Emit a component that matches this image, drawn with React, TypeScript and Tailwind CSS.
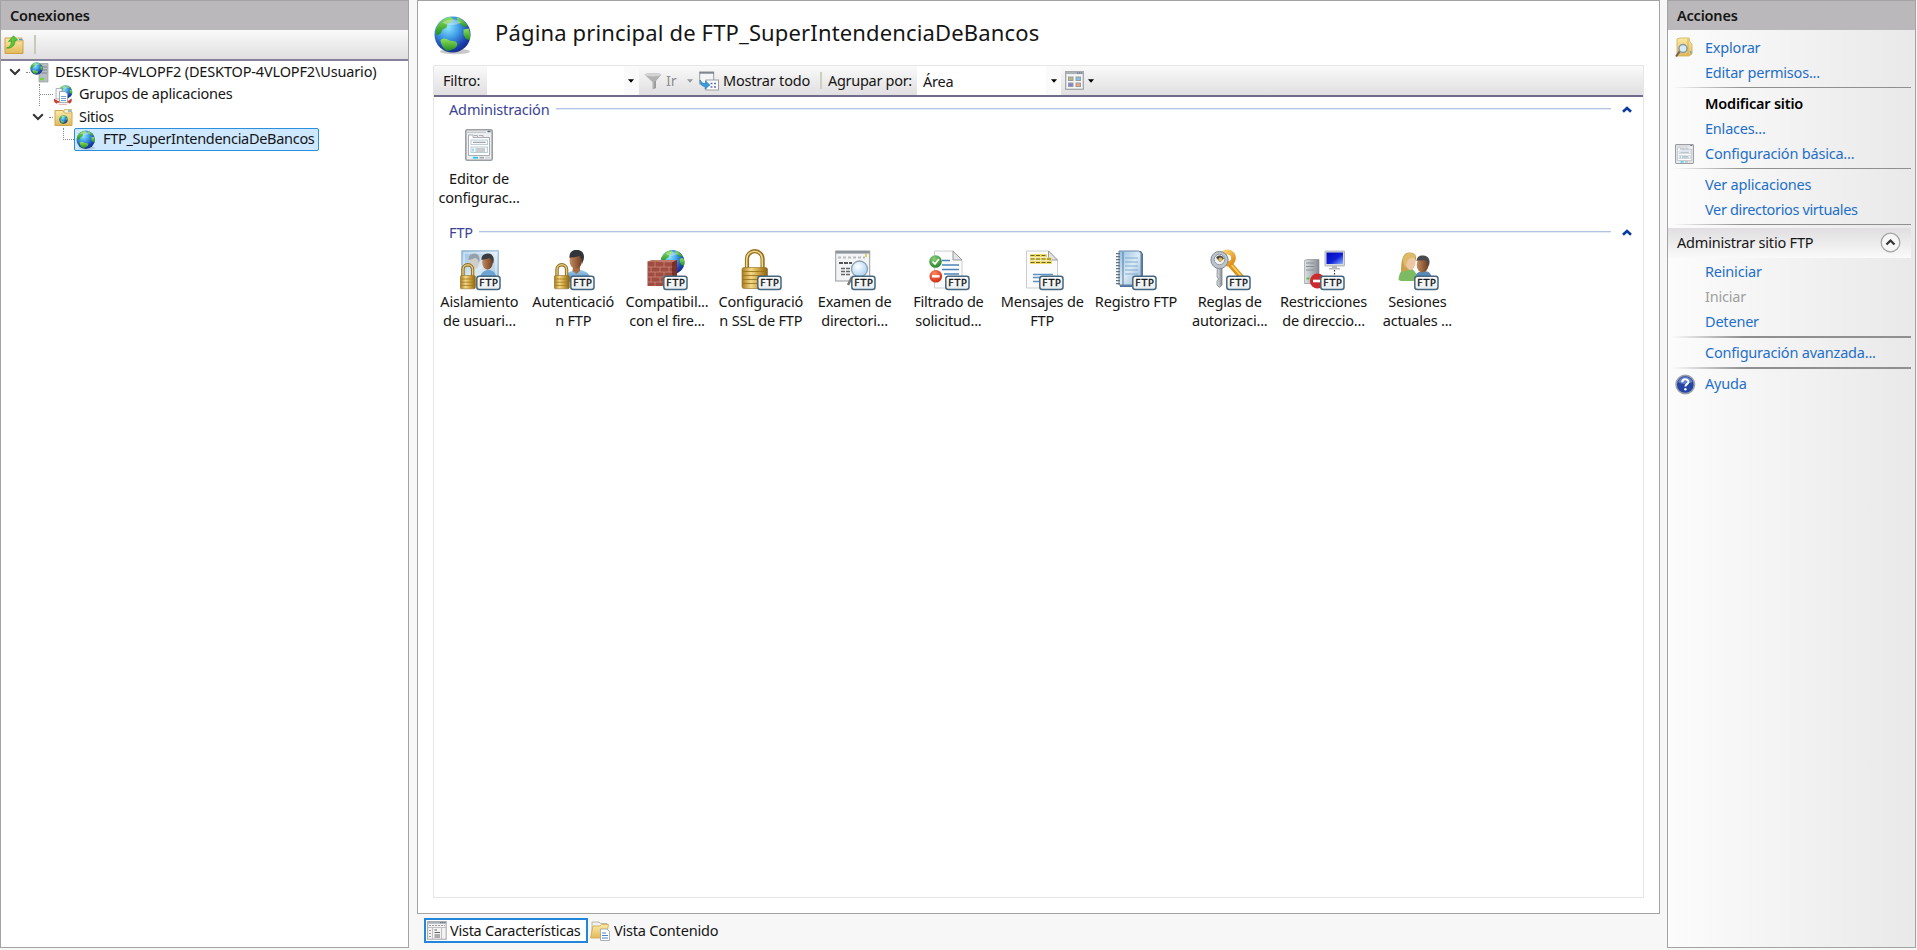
import type { ReactNode } from "react";

/* ---------- shared gradients ---------- */
function Defs() {
  return (
    <svg width="0" height="0" className="absolute" aria-hidden="true">
      <defs>
        <radialGradient id="sea" cx="0.38" cy="0.3" r="0.75">
          <stop offset="0" stopColor="#8fe6fb" />
          <stop offset="0.4" stopColor="#3f9de6" />
          <stop offset="0.8" stopColor="#1b3fae" />
          <stop offset="1" stopColor="#142c86" />
        </radialGradient>
        <linearGradient id="land" x1="0" y1="0" x2="0" y2="1">
          <stop offset="0" stopColor="#8fe05a" />
          <stop offset="1" stopColor="#1f8d22" />
        </linearGradient>
        <linearGradient id="gold" x1="0" y1="0" x2="1" y2="0">
          <stop offset="0" stopColor="#a97a1c" />
          <stop offset="0.35" stopColor="#f3d98a" />
          <stop offset="0.7" stopColor="#c89a34" />
          <stop offset="1" stopColor="#86601a" />
        </linearGradient>
        <linearGradient id="folder" x1="0" y1="0" x2="0" y2="1">
          <stop offset="0" stopColor="#fbeaa4" />
          <stop offset="1" stopColor="#e3b95a" />
        </linearGradient>
        <linearGradient id="glass" x1="0" y1="0" x2="1" y2="1">
          <stop offset="0" stopColor="#8fbfe3" />
          <stop offset="0.5" stopColor="#dcebf5" />
          <stop offset="1" stopColor="#8db4d6" />
        </linearGradient>
        <linearGradient id="steel" x1="0" y1="0" x2="1" y2="0">
          <stop offset="0" stopColor="#dfe3e6" />
          <stop offset="1" stopColor="#858c92" />
        </linearGradient>
        <linearGradient id="shirt" x1="0" y1="0" x2="0" y2="1">
          <stop offset="0" stopColor="#9fd0f0" />
          <stop offset="1" stopColor="#3e78ae" />
        </linearGradient>
        <linearGradient id="skin" x1="0" y1="0" x2="1" y2="0">
          <stop offset="0" stopColor="#c58a5e" />
          <stop offset="1" stopColor="#6e3f22" />
        </linearGradient>
        <radialGradient id="lens" cx="0.4" cy="0.35" r="0.7">
          <stop offset="0" stopColor="#ffffff" />
          <stop offset="1" stopColor="#a5cff2" />
        </radialGradient>
        <radialGradient id="red" cx="0.4" cy="0.3" r="0.7">
          <stop offset="0" stopColor="#ff8a62" />
          <stop offset="1" stopColor="#cf2a10" />
        </radialGradient>
        <radialGradient id="green" cx="0.4" cy="0.3" r="0.7">
          <stop offset="0" stopColor="#8ad07a" />
          <stop offset="1" stopColor="#2c8530" />
        </radialGradient>
        <linearGradient id="amber" x1="0" y1="0" x2="1" y2="1">
          <stop offset="0" stopColor="#ffd873" />
          <stop offset="1" stopColor="#dd8a12" />
        </linearGradient>
        <linearGradient id="screen" x1="0" y1="0" x2="1" y2="1">
          <stop offset="0" stopColor="#0008b8" />
          <stop offset="0.55" stopColor="#1020d8" />
          <stop offset="1" stopColor="#8fb6ff" />
        </linearGradient>
        <linearGradient id="badge" x1="0" y1="0" x2="0" y2="1">
          <stop offset="0" stopColor="#ffffff" />
          <stop offset="1" stopColor="#e6ecf0" />
        </linearGradient>
      </defs>
    </svg>
  );
}

/* ---------- building blocks for drawings ---------- */
function Globe({ cx, cy, r }: { cx: number; cy: number; r: number }) {
  return (
    <g transform={`translate(${cx} ${cy}) scale(${r / 18})`}>
      <circle r="18" fill="url(#sea)" />
      <path d="M-15-9C-12-14-6-17-2-17.500L1-15-1-12-5-11-6-7-10-5-12-1-16 1C-17-2-17-6-15-9Z" fill="url(#land)" />
      <path d="M4-17C9-16 13-12 15-9L12-7 9-10 6-11 5-14Z" fill="url(#land)" />
      <path d="M11-5L16-6C18-2 18 3 17 6L13 4 11 0Z" fill="url(#land)" />
      <path d="M-12 6C-10 3-6 4-3 6L3 7C6 9 5 12 2 14L-4 16.500C-8 16-11 12-12 6Z" fill="url(#land)" />
      <path d="M-10-12C-5-16 4-16 9-12 3-9-5-8-10-12Z" fill="#fff" opacity="0.35" />
    </g>
  );
}

function FtpBadge() {
  return (
    <g>
      <rect x="15.800" y="27.300" width="23.200" height="13.200" rx="2.500" fill="url(#badge)" stroke="#46677f" strokeWidth="1.500" />
      <text x="27.400" y="37.400" textAnchor="middle" fontFamily="'DejaVu Sans', sans-serif" fontSize="9.500" fontWeight="400" fill="#111" stroke="#111" strokeWidth="0.350" textLength="18.500">
        FTP
      </text>
    </g>
  );
}

function SmallLock() {
  return (
    <g>
      <path d="M2 28V20.500a4.800 4.800 0 0 1 9.600 0V28" fill="none" stroke="#8d6c22" strokeWidth="3.400" />
      <path d="M2 28V20.500a4.800 4.800 0 0 1 9.600 0V28" fill="none" stroke="#e6cb7c" strokeWidth="1.400" />
      <rect x="-0.800" y="26.500" width="15.200" height="13.300" rx="1.500" fill="url(#gold)" stroke="#94712a" strokeWidth="0.600" />
      <path d="M0 30H14M0 33.200H14M0 36.400H14" stroke="#a17820" strokeWidth="0.800" />
    </g>
  );
}

function Person() {
  return (
    <g>
      <path d="M8 33C9 25 13 23 19 21.500L26 21C33 23 36 26 36 33Z" fill="url(#shirt)" />
      <path d="M18 17H25V22L21.500 25 17.500 22Z" fill="#a56e47" />
      <ellipse cx="20.800" cy="11.800" rx="6.200" ry="8" fill="url(#skin)" />
      <path d="M14.500 9C14 3 18 0.500 22 1 28 1 30 6 28.500 11L27 15C27 11 26 8 24 7 21 8.500 17 8 14.500 9Z" fill="#33343a" />
    </g>
  );
}

function Doc({ x, w }: { x: number; w: number }) {
  const r = x + w;
  return (
    <g>
      <path d={`M${x} 2H${r - 9}L${r} 11V39H${x}Z`} fill="#fbfbfc" stroke="#c9cdd1" />
      <path d={`M${r - 9} 2V11H${r}Z`} fill="#e2e4e6" stroke="#96999e" />
    </g>
  );
}

function FeatureSvg({ children }: { children: ReactNode }) {
  return (
    <svg width="42" height="42" viewBox="-1 0 42 42" className="ml-[3px] shrink-0">
      {children}
      <FtpBadge />
    </svg>
  );
}

function WindowPage({ w, h }: { w: number; h: number }) {
  return (
    <svg width={w} height={h} viewBox="0 0 28 32" preserveAspectRatio="none" className="shrink-0">
      <rect x="0.800" y="0.800" width="26.400" height="30.400" rx="1.500" fill="#eceef0" stroke="#9b9ea2" strokeWidth="1.600" />
      <path d="M2 3.200H21" stroke="#b7babd" strokeWidth="1" />
      <path d="M22.500 2.500H25.500" stroke="#5b6875" strokeWidth="1.500" />
      <path d="M3.500 6H8V8.500H24.500V26.500H3.500Z" fill="#fff" stroke="#a9adb6" />
      <path d="M9 6.500H12.500V8.500M14 6.500H18V8.500" fill="none" stroke="#a9adb6" />
      <rect x="6" y="11" width="16.500" height="4.500" fill="#f6f8fa" stroke="#bccbd8" />
      <path d="M8 13.300H20.500" stroke="#8f9499" />
      <rect x="6" y="18" width="16.500" height="5.500" fill="#f6f8fa" stroke="#bccbd8" />
      <path d="M10.500 20H20M10.500 22H20" stroke="#9da2a6" />
      <path d="M8 19.500V22.500" stroke="#35c3ef" />
      <path d="M8 28.700H13" stroke="#21c7ee" strokeWidth="1.800" />
      <path d="M14.500 28.700H19" stroke="#a5a8aa" strokeWidth="1.600" />
      <path d="M20.500 28.700H25" stroke="#cfd1d3" strokeWidth="1.600" />
    </svg>
  );
}

/* ---------- feature icons ---------- */
function IsolationIcon() {
  return (
    <FeatureSvg>
      <rect x="0.800" y="1.800" width="36.500" height="34" fill="url(#glass)" stroke="#8fb3d1" strokeWidth="1" />
      <rect x="3" y="4" width="32" height="29" fill="none" stroke="#eaf4fb" />
      <path d="M4 33C5 25 8 22 13 21 19 21 22 25 22 33Z" fill="#dbe8f1" />
      <ellipse cx="13" cy="13.500" rx="5" ry="6.800" fill="#d1cdca" />
      <path d="M7.500 11C7 6 11 4 14 4.500 18 5 19.500 9 18 14 17 10 16 9.500 14 9 12 10.500 10 10 7.500 11Z" fill="#95a0aa" />
      <path d="M18 33C19 25 21 22 27 21 33 21 36 25 36 33Z" fill="#6ba3d2" />
      <ellipse cx="26.500" cy="13.500" rx="5.300" ry="7.200" fill="url(#skin)" />
      <path d="M20.500 11C20 6 24 4 27.500 4.500 32 5 34 9 32 15 31 10.500 30 9.500 28 9 26 10.500 23 10 20.500 11Z" fill="#3a3c42" />
      <SmallLock />
    </FeatureSvg>
  );
}
function AuthIcon() {
  return (
    <FeatureSvg>
      <Person />
      <SmallLock />
    </FeatureSvg>
  );
}
function FirewallIcon() {
  return (
    <FeatureSvg>
      <Globe cx={24.500} cy={13} r={12} />
      <path d="M-0.500 12.500L5 11H29V33L21 37H-0.500Z" fill="#a04c40" />
      <path d="M-0.500 12.500L5 11H29L24 13.500Z" fill="#c07a6a" />
      <path d="M0 18H28M0 23H28M0 28H28M0 33H24M7 13V18M16 13V18M3 18V23M12 18V23M21 18V23M7 23V28M16 23V28M3 28V33M12 28V33M7 33V37" stroke="#cf9385" strokeWidth="0.700" />
      <path d="M24 13.500L29 11V33L24 35.500Z" fill="#6e241e" opacity="0.750" />
    </FeatureSvg>
  );
}
function SslIcon() {
  return (
    <FeatureSvg>
      <path d="M5 20V10a7.800 7.800 0 0 1 15.600 0V20" fill="none" stroke="#94701f" strokeWidth="4.200" />
      <path d="M4.700 20V10a7.800 7.800 0 0 1 15.600 0V20" fill="none" stroke="#efd78c" strokeWidth="1.600" />
      <rect x="0" y="18.500" width="25.500" height="21" rx="2" fill="url(#gold)" stroke="#8e6c22" strokeWidth="0.600" />
      <path d="M1 22.500H25M1 26.500H25M1 30.500H25M1 34.500H25" stroke="#9b731d" strokeWidth="0.900" />
    </FeatureSvg>
  );
}
function BrowseIcon() {
  return (
    <FeatureSvg>
      <rect x="-0.300" y="2" width="34" height="30" fill="#f3f4f5" stroke="#96999d" />
      <rect x="0" y="2" width="33.500" height="2.600" fill="#8d959d" />
      <path d="M2 8.500H29" stroke="#b9bcc0" strokeWidth="2" strokeDasharray="3 2" />
      <path d="M30 5V8" stroke="#e8d35a" strokeWidth="2" />
      <path d="M3 14H16" stroke="#222" strokeWidth="1.600" strokeDasharray="4 1" />
      <path d="M5 19.500H14M5 22.500H14M5 25.500H14" stroke="#666" strokeWidth="1.300" strokeDasharray="4 1" />
      <path d="M16 28L12 36" stroke="#777" strokeWidth="2.500" />
      <circle cx="23.500" cy="20" r="8" fill="url(#lens)" stroke="#8e9fb0" strokeWidth="1.300" />
    </FeatureSvg>
  );
}
function FilterIcon() {
  return (
    <FeatureSvg>
      <Doc x={4.500} w={27.500} />
      <path d="M12 11.500H20M12 16H29M12 20.500H29M14 25H29" stroke="#4c83bd" strokeWidth="1.300" />
      <circle cx="5.500" cy="12.500" r="6.300" fill="url(#green)" />
      <path d="M2.500 12.500L5 15 9 10" fill="none" stroke="#fff" strokeWidth="1.700" />
      <circle cx="5.800" cy="27.300" r="6.300" fill="url(#red)" />
      <path d="M2 27.300H9.600" stroke="#fff" strokeWidth="2.400" />
    </FeatureSvg>
  );
}
function MessagesIcon() {
  return (
    <FeatureSvg>
      <Doc x={2.500} w={31} />
      <path d="M6 6.500H23M6 10H28M6 13.500H28" stroke="#eedc70" strokeWidth="3" />
      <path d="M6.500 6.500H22M6.500 10H27M6.500 13.500H27" stroke="#6e6420" strokeWidth="1.200" strokeDasharray="4 1.500" />
      <path d="M9 25.500H29M9 28.500H16M9 32.500H16" stroke="#5c92c8" strokeWidth="1.300" />
    </FeatureSvg>
  );
}
function LogIcon() {
  return (
    <FeatureSvg>
      <path d="M3 2H24L26 5V37L24 38H3Z" fill="#52749d" />
      <path d="M2 2H21.500L24 4V36H2Z" fill="url(#glass)" stroke="#6787aa" />
      <path d="M6 3V36" stroke="#54779d" />
      <path d="M8 9H21M8 13H21M8 17H21M8 21H21M8 25H21" stroke="#7ba4c8" strokeWidth="0.900" />
      <path d="M1 4V37" stroke="#66727e" strokeWidth="4" strokeDasharray="1.200 1.800" />
    </FeatureSvg>
  );
}
function RulesIcon() {
  return (
    <FeatureSvg>
      <path d="M17 13L31 29" stroke="#df9417" strokeWidth="5.500" />
      <path d="M17 12L30 27" stroke="#fcd46b" strokeWidth="1.500" />
      <circle cx="16.500" cy="9" r="6" fill="none" stroke="url(#amber)" strokeWidth="4.800" />
      <path d="M6.300 18H11V36L8.500 38.500 6 36V32L7.500 30 6 28Z" fill="url(#steel)" stroke="#7e858d" strokeWidth="0.800" />
      <circle cx="8.500" cy="11" r="8.600" fill="#bcc4cc" stroke="#7f8992" />
      <circle cx="8.500" cy="10.500" r="5.300" fill="#edf0f2" stroke="#8e969d" />
      <path d="M5 8.500a4.500 4.500 0 0 1 8 1L9 13Z" fill="#4d4b49" />
      <circle cx="9.500" cy="10.500" r="2" fill="#e9b64b" />
    </FeatureSvg>
  );
}
function RestrictIcon() {
  return (
    <FeatureSvg>
      <path d="M-0.700 11.500L2 10.500H14V34L11 34.500H-0.700Z" fill="url(#steel)" stroke="#80868b" strokeWidth="0.600" />
      <path d="M1 14H9M1 17.500H9M1 21H9" stroke="#8a9096" />
      <path d="M1.500 29.500H4.500" stroke="#64b943" strokeWidth="2" />
      <rect x="20" y="2" width="19.500" height="15" rx="0.500" fill="#d8dadd" stroke="#a2a6aa" strokeWidth="0.800" />
      <rect x="21.500" y="3.500" width="16.500" height="11.500" fill="url(#screen)" />
      <path d="M27 17H32V19H35V20.500H24V19H27Z" fill="#b4b7bb" />
      <path d="M29.500 21V27" stroke="#333" strokeWidth="1.200" strokeDasharray="1.500 1.500" />
      <circle cx="12.500" cy="32" r="7.600" fill="#c92b2f" />
      <path d="M8 32H16" stroke="#fff" strokeWidth="2.600" />
    </FeatureSvg>
  );
}
function SessionsIcon() {
  return (
    <FeatureSvg>
      <path d="M15 33C15 25 18 23 24 22 31 22 33 25 33 33Z" fill="#5a8bb8" />
      <ellipse cx="23.500" cy="16" rx="5.800" ry="7.500" fill="url(#skin)" />
      <path d="M17.500 12C18 7 21 6 25 6.500 30 7 32 12 29.500 18 29 14 28 12 25.500 11 22 12 20 11 17.500 12Z" fill="#494a4d" />
      <path d="M-0.500 31C0 23 3 20 9 19 15 19.500 18 24 18 31L14 32H2Z" fill="#7dbb62" />
      <path d="M2 23C2 13 3 4 10 3.500 17 3 18.500 8 16 13L10 21Z" fill="#c9a04d" />
      <ellipse cx="11.500" cy="13.500" rx="5" ry="7.500" fill="#edc7a4" />
      <path d="M4 12C4 6 8 3.500 12 4 16 4.500 17 7 16 9 13 8.500 10 9 8.500 12L6 19Z" fill="#ddbb6b" />
    </FeatureSvg>
  );
}

/* ---------- small icons ---------- */
function FolderUpIcon() {
  return (
    <svg width="20" height="20" viewBox="0 0 20 20" className="shrink-0">
      <path d="M1 3H8L9 5H19V18.500H1Z" fill="url(#folder)" stroke="#cda14b" />
      <path d="M11 3H18V6H11Z" fill="#f8e7ad" stroke="#c6a04f" strokeWidth="0.700" />
      <path d="M15 4.500H18" stroke="#4599dd" strokeWidth="1.500" />
      <path d="M2.500 13C6 12.500 7.500 9.500 7.500 6L4.500 6.500 9.500 0.800 13.500 5 11 5.500C11 10 8 14 2.500 13Z" fill="#58c93b" stroke="#319527" strokeWidth="0.700" />
    </svg>
  );
}
function ServerIcon() {
  return (
    <svg width="19" height="21" viewBox="0 0 19 21" className="shrink-0">
      <path d="M9 3L11 1.500H18V20H9Z" fill="#b7bdc2" stroke="#969ca1" strokeWidth="0.700" />
      <path d="M11 5H17M11 8H17M11 11H17" stroke="#7f868c" />
      <path d="M10 17H14" stroke="#78d33f" strokeWidth="2.500" />
      <Globe cx={6.500} cy={6.500} r={6.200} />
    </svg>
  );
}
function PoolsIcon() {
  return (
    <svg width="20" height="20" viewBox="0 0 20 20" className="shrink-0">
      <Globe cx={12.500} cy={7} r={6.800} />
      <path d="M1 13.500C0 18 4 19.500 10 19.500S20 18 18.500 13.500L15 16H5Z" fill="#cf3c32" />
      <path d="M3 3.500H9V14H3Z" fill="#f4f6f8" stroke="#9ea6ae" strokeWidth="0.800" />
      <path d="M6.500 6.500H12L14.500 9V17.500H6.500Z" fill="#fff" stroke="#8e98a2" strokeWidth="0.800" />
      <path d="M8 11.500H13M8 13.500H13M8 15.500H13" stroke="#5b95cf" strokeWidth="0.900" />
      <path d="M4 18.500H16" stroke="#eef0f2" strokeWidth="1.500" />
    </svg>
  );
}
function SitesIcon() {
  return (
    <svg width="19" height="19" viewBox="0 0 19 19" className="shrink-0">
      <path d="M1 2.500H9L10 4H18V17.500H1Z" fill="url(#folder)" stroke="#cfa650" />
      <path d="M10 1.500H17.500V5H10Z" fill="#fbf0c6" stroke="#c9a85b" strokeWidth="0.700" />
      <path d="M14 3H17" stroke="#4b9fe0" strokeWidth="1.300" />
      <Globe cx={9.500} cy={11.500} r={4.300} />
    </svg>
  );
}
function GlobeIcon() {
  return (
    <svg width="20" height="20" viewBox="0 0 20 20" className="shrink-0">
      <ellipse cx="11" cy="18" rx="8" ry="1.800" fill="#9fb3c4" opacity="0.600" />
      <Globe cx={9.700} cy={9.700} r={9.200} />
    </svg>
  );
}
function TitleGlobe() {
  return (
    <svg width="38" height="39" viewBox="0 0 38 39" className="mt-[3px] shrink-0">
      <ellipse cx="21" cy="35.500" rx="15" ry="2.800" fill="#888" opacity="0.450" />
      <Globe cx={18.500} cy={18.500} r={18} />
    </svg>
  );
}
function FunnelIcon() {
  return (
    <svg width="18" height="18" viewBox="0 0 18 18" className="shrink-0">
      <path d="M0.500 2.500C4 0.500 14 0.500 17.500 2.500L12 9V16L8.500 17.500V10Z" fill="#b1b1b1" />
      <ellipse cx="9" cy="2.800" rx="8" ry="1.700" fill="#d4d4d4" />
      <path d="M12 9V16L10.300 16.700V9.500Z" fill="#999" />
    </svg>
  );
}
function ShowAllIcon() {
  return (
    <svg width="20" height="20" viewBox="0 0 20 20" className="shrink-0">
      <rect x="0.700" y="1" width="14" height="12" fill="#f4f5f6" stroke="#999da1" />
      <path d="M0.500 1.800H15" stroke="#7e858c" strokeWidth="1.800" />
      <rect x="7" y="9" width="12.500" height="10" fill="#fff" stroke="#9a9ea2" />
      <path d="M11.500 12.500H13.500M15 12.500H17M11.500 16H13.500M15 16H17" stroke="#5a6fb5" strokeWidth="1.700" />
      <path d="M1 9C1 13.500 3 15.500 6 15.500V18.300L11 14 6.500 9.800V12.500C4 12.500 2.500 11.500 1 9Z" fill="#3b9ad9" stroke="#2277b5" strokeWidth="0.500" />
    </svg>
  );
}
function ViewIcon() {
  return (
    <svg width="19" height="19" viewBox="0 0 19 19" className="shrink-0">
      <rect x="0.700" y="0.700" width="17.600" height="17.600" fill="#f5f5f6" stroke="#a2a5a9" strokeWidth="1.300" />
      <path d="M1 2H18" stroke="#a9b0b7" strokeWidth="2.200" />
      <path d="M12 2H17" stroke="#566b80" strokeWidth="1" strokeDasharray="1.300 0.700" />
      <rect x="3.500" y="6" width="4.500" height="3.500" fill="#b5b77e" stroke="#9a9da0" />
      <rect x="11" y="6" width="4.500" height="3.500" fill="#7fc0e4" stroke="#9a9da0" />
      <rect x="3.500" y="12" width="4.500" height="3.500" fill="#8a7ed2" stroke="#9a9da0" />
      <rect x="11" y="12" width="4.500" height="3.500" fill="#eba286" stroke="#9a9da0" />
    </svg>
  );
}
function ExploreIcon() {
  return (
    <svg width="18" height="21" viewBox="0 0 18 21" className="shrink-0">
      <path d="M2 2L5 1H14L15 5 17 7V17L14 19H2Z" fill="url(#folder)" stroke="#d2ae54" strokeWidth="0.800" />
      <path d="M13 2V18" stroke="#d6b14e" />
      <path d="M15.800 14V16.500" stroke="#4da3dd" strokeWidth="1.200" />
      <path d="M5 14L1 19.500" stroke="#6e6255" strokeWidth="2" />
      <circle cx="8" cy="11.500" r="4" fill="#d8ecf8" stroke="#8495a5" strokeWidth="1.400" />
    </svg>
  );
}
function HelpIcon() {
  return (
    <svg width="21" height="21" viewBox="0 0 21 21" className="shrink-0">
      <circle cx="10.300" cy="10.500" r="9.200" fill="#2545a6" stroke="#9da1a8" strokeWidth="1.700" />
      <path d="M3 8A7.800 7.800 0 0 1 17.500 8C13 10 8 11 3 8Z" fill="#7d9be0" opacity="0.700" />
      <path d="M7.200 8.200C7.200 4.300 13.600 4.400 13.400 8 13.300 10.200 10.500 10 10.400 12.500" fill="none" stroke="#fff" strokeWidth="2" />
      <circle cx="10.400" cy="15.200" r="1.200" fill="#fff" />
    </svg>
  );
}
function FeaturesViewIcon() {
  return (
    <svg width="20" height="19" viewBox="0 0 20 19" className="shrink-0">
      <rect x="0.600" y="0.600" width="18.600" height="17.600" fill="#f3f3f3" stroke="#a5a5a5" />
      <path d="M1 1.700H19" stroke="#a8b0b8" strokeWidth="2" />
      <path d="M13 1.700H18.500" stroke="#596979" strokeDasharray="1.300 0.700" />
      <path d="M2 4.500H18" stroke="#9c9c9c" strokeDasharray="2 1" />
      <path d="M5.500 6V18M14.500 6V18M1 6.500H19" stroke="#c0c0c0" />
      <path d="M2 9.500H4M2 12.500H4M2 15.500H4" stroke="#999" />
      <path d="M7.500 9H10M7.500 11.500H13M7.500 14H13M7.500 16H13" stroke="#555" strokeWidth="0.900" />
    </svg>
  );
}
function ContentViewIcon() {
  return (
    <svg width="20" height="20" viewBox="0 0 20 20" className="shrink-0">
      <path d="M2 1H9L10.500 2.500H17V13H2Z" fill="#eef0f1" stroke="#bdb79f" />
      <path d="M0.500 17L3 5H10L11.500 3.500H18.500L16 17Z" fill="url(#folder)" stroke="#cfa650" strokeWidth="0.800" />
      <path d="M10.500 8H17L19.500 10.500V19.500H10.500Z" fill="#fff" stroke="#9b9fa3" strokeWidth="0.800" />
      <path d="M12 12H16M12 14.500H18M12 17H18" stroke="#4b85c9" strokeWidth="1.100" />
    </svg>
  );
}
function Caret({ color }: { color: string }) {
  return (
    <svg width="6" height="4" viewBox="0 0 6 4" className="shrink-0">
      <path d="M0 0.300H6L3 3.800Z" fill={color} />
    </svg>
  );
}
function TreeChevron() {
  return (
    <svg width="12" height="8" viewBox="0 0 12 8" className="shrink-0">
      <path d="M1.200 1.200L6 6 10.800 1.200" fill="none" stroke="#333" strokeWidth="2" />
    </svg>
  );
}

/* ---------- data ---------- */
type Feature = { icon: ReactNode; lines: string[] };
const ftpFeatures: Feature[] = [
  { icon: <IsolationIcon />, lines: ["Aislamiento", "de usuari..."] },
  { icon: <AuthIcon />, lines: ["Autenticació", "n FTP"] },
  { icon: <FirewallIcon />, lines: ["Compatibil...", "con el fire..."] },
  { icon: <SslIcon />, lines: ["Configuració", "n SSL de FTP"] },
  { icon: <BrowseIcon />, lines: ["Examen de", "directori..."] },
  { icon: <FilterIcon />, lines: ["Filtrado de", "solicitud..."] },
  { icon: <MessagesIcon />, lines: ["Mensajes de", "FTP"] },
  { icon: <LogIcon />, lines: ["Registro FTP"] },
  { icon: <RulesIcon />, lines: ["Reglas de", "autorizaci..."] },
  { icon: <RestrictIcon />, lines: ["Restricciones", "de direccio..."] },
  { icon: <SessionsIcon />, lines: ["Sesiones", "actuales ..."] },
];

/* ---------- layout pieces ---------- */
function PanelHeader({ children }: { children: ReactNode }) {
  return (
    <div className="flex h-[29px] shrink-0 items-center bg-[#bbb8bb] pb-0.5 pl-[9px] text-[14.500px] font-semibold tracking-[-0.2px]">
      {children}
    </div>
  );
}

function GroupHeading({ children }: { children: ReactNode }) {
  return (
    <div className="flex h-[22px] items-center pr-[11px] pl-[15px]">
      <span className="pb-px tracking-[-0.15px] text-[#3a4396]">{children}</span>
      <span className="ml-1.5 h-0.5 flex-1 border-t border-[#b4c4e4] bg-[#e4ebf7]" />
      <svg width="10" height="7" viewBox="0 0 10 7" className="ml-[11px]">
        <path d="M1 5.800L5 2 9 5.800" fill="none" stroke="#0a3aa0" strokeWidth="2.600" />
      </svg>
    </div>
  );
}

function FeatureItem({ icon, lines }: Feature) {
  return (
    <div className="flex w-[93.800px] shrink-0 flex-col items-center">
      <div className="flex h-[43px] items-start justify-center">{icon}</div>
      {lines.map((line) => (
        <span key={line} className="h-[18.700px] leading-[18.700px] whitespace-nowrap">
          {line}
        </span>
      ))}
    </div>
  );
}

function Separator() {
  return (
    <div className="h-[6px] pt-[1.500px] pl-1">
      <div className="mr-1 h-[1.500px] bg-linear-to-r from-transparent via-[#8f8f8f] via-30% to-[#909090]" />
    </div>
  );
}

function Action({ children, icon, tone = "text-[#1e6fcb]" }: { children: ReactNode; icon?: ReactNode; tone?: string }) {
  return (
    <div className="flex h-[25px] items-center">
      <span className="flex w-[37px] shrink-0 items-center pl-[7px]">{icon}</span>
      <span className={`pb-[2px] ${tone}`}>{children}</span>
    </div>
  );
}

export default function App() {
  return (
    <div className="flex h-[950px] w-[1917px] overflow-hidden bg-[#f7f7f7] font-['Noto_Sans','Open_Sans',sans-serif] text-[14.500px] leading-5 tracking-[-0.2px] whitespace-nowrap text-[#151515]">
      <Defs />

      {/* Connections */}
      <aside className="flex h-[948px] w-[409px] shrink-0 flex-col border border-[#a3a3a3] bg-white">
        <PanelHeader>Conexiones</PanelHeader>
        <div className="flex h-[31px] shrink-0 items-center border-b-2 border-[#858299] bg-linear-to-b from-[#fafafa] to-[#e1dfe1] pl-[3px]">
          <FolderUpIcon />
          <span className="ml-2.5 h-[19px] w-0.5 bg-[#c9c9b6]" />
        </div>
        <div className="flex flex-col">
          <div className="flex h-[22.500px] items-center pl-2">
            <TreeChevron />
            <span className="ml-[5px] w-1 border-t border-dotted border-[#888]" />
            <ServerIcon />
            <span className="ml-[6px] pb-[2px] tracking-[-0.15px]">DESKTOP-4VLOPF2 (DESKTOP-4VLOPF2\Usuario)</span>
          </div>
          <div className="flex h-[22.500px] items-center pl-[38px]">
            <span className="h-full w-px border-l border-dotted border-[#888]" />
            <span className="w-[13px] border-t border-dotted border-[#888]" />
            <PoolsIcon />
            <span className="ml-[6px] pb-[3px]">Grupos de aplicaciones</span>
          </div>
          <div className="flex h-[22.500px] items-center pl-[31px]">
            <TreeChevron />
            <span className="mr-px ml-[5px] w-1 border-t border-dotted border-[#888]" />
            <SitesIcon />
            <span className="ml-[6px] pb-[2px] tracking-[-0.3px]">Sitios</span>
          </div>
          <div className="flex h-[22.500px] items-center pl-[62px]">
            <span className="-mt-3 h-3 w-[11px] border-b border-l border-dotted border-[#888]" />
            <div className="flex h-[23px] w-[245px] items-center rounded-xs border border-[#2a8fdf] bg-[#cde8ff] pl-px">
              <GlobeIcon />
              <span className="ml-[7px] pb-[3px] tracking-[-0.3px]">FTP_SuperIntendenciaDeBancos</span>
            </div>
          </div>
        </div>
      </aside>

      {/* Feature view */}
      <main className="ml-2 flex w-[1243px] shrink-0 flex-col">
        <section className="flex h-[914px] shrink-0 flex-col border border-[#a3a3a3] bg-white pr-[15px] pb-[15px] pl-[15px]">
          <div className="flex h-16 shrink-0 items-center pt-px pl-px">
            <TitleGlobe />
            <h1 className="ml-[23px] pb-1 text-[22px] tracking-[0.150px]">Página principal de FTP_SuperIntendenciaDeBancos</h1>
          </div>
          <div className="flex min-h-0 flex-1 flex-col border border-[#e6e6e6]">
            <div className="flex h-[31px] shrink-0 items-center border-b-2 border-[#6f6d8b] bg-linear-to-b from-[#fafafa] to-[#e1dfe1]">
              <span className="w-[53px] shrink-0 pb-[2px] pl-[9px]">Filtro:</span>
              <div className="flex h-full w-[152px] shrink-0 items-center justify-end bg-white">
                <span className="flex h-full w-[15px] items-center justify-center bg-[#fafafa] pr-px">
                  <Caret color="#000" />
                </span>
              </div>
              <span className="ml-[5px] flex">
                <FunnelIcon />
              </span>
              <span className="ml-1 w-[21px] pb-[2px] text-[#8f8f8f]">Ir</span>
              <Caret color="#999" />
              <span className="ml-[6px] flex">
                <ShowAllIcon />
              </span>
              <span className="ml-1 w-[97px] shrink-0 pb-[2px]">Mostrar todo</span>
              <span className="h-[17px] w-0.5 bg-[#cfcfbd]" />
              <span className="ml-[6px] w-[89px] shrink-0 pb-[2px] tracking-[-0.3px]">Agrupar por:</span>
              <div className="flex h-full w-[144px] shrink-0 items-center justify-between bg-white pl-[6px]">
                <span>Área</span>
                <span className="flex h-full w-[15px] items-center justify-center bg-[#fafafa]">
                  <Caret color="#000" />
                </span>
              </div>
              <span className="mr-[4px] ml-[4px] flex">
                <ViewIcon />
              </span>
              <Caret color="#000" />
            </div>
            <div className="flex flex-col pt-px">
              <GroupHeading>Administración</GroupHeading>
              <div className="flex h-[101px] pt-[9px]">
                <div className="flex w-[90px] flex-col items-center">
                  <div className="flex h-[40px] items-start">
                    <WindowPage w={28} h={32} />
                  </div>
                  <span className="h-[18.700px] leading-[18.700px]">Editor de</span>
                  <span className="h-[18.700px] leading-[18.700px]">configurac...</span>
                </div>
              </div>
              <GroupHeading>FTP</GroupHeading>
              <div className="-ml-[1.500px] flex pt-[6px]">
                {ftpFeatures.map((f) => (
                  <FeatureItem key={f.lines[0]} icon={f.icon} lines={f.lines} />
                ))}
              </div>
            </div>
          </div>
        </section>
        <nav className="flex pt-1 pl-[7px]">
          <div className="flex h-[25px] w-[164px] items-center border-2 border-[#2287dc] bg-white pl-px">
            <FeaturesViewIcon />
            <span className="ml-[3px] pb-[2px] tracking-[-0.25px]">Vista Características</span>
          </div>
          <div className="flex h-[25px] items-center pl-[2px]">
            <ContentViewIcon />
            <span className="ml-1 pb-[2px]">Vista Contenido</span>
          </div>
        </nav>
      </main>

      {/* Actions */}
      <aside className="ml-[7px] flex h-[948px] w-[249px] shrink-0 flex-col border border-[#a3a3a3] bg-linear-to-r from-[#fcfcfc] to-[#e9e9e9]">
        <PanelHeader>Acciones</PanelHeader>
        <div className="flex flex-col pt-[5px]">
          <Action icon={<ExploreIcon />}>Explorar</Action>
          <Action>Editar permisos...</Action>
          <Separator />
          <Action tone="font-semibold text-black">Modificar sitio</Action>
          <Action>Enlaces...</Action>
          <Action icon={<WindowPage w={19} h={20} />}>Configuración básica...</Action>
          <Separator />
          <Action>Ver aplicaciones</Action>
          <Action tone="tracking-[-0.35px] text-[#1e6fcb]">Ver directorios virtuales</Action>
          <Separator />
          <div className="mr-1 mb-[1.500px] flex h-[30px] items-center justify-between bg-linear-to-b from-[#e0dee0] to-[#fafafa] pr-[10px] pb-px pl-[9px]">
            <span className="pb-px">Administrar sitio FTP</span>
            <svg width="21" height="21" viewBox="0 0 21 21">
              <circle cx="10.500" cy="10.500" r="9.300" fill="#f6f6f6" stroke="#a6a6a6" strokeWidth="1.300" />
              <path d="M6.500 12.500L10.500 8.500 14.500 12.500" fill="none" stroke="#333" strokeWidth="2.200" />
            </svg>
          </div>
          <Action>Reiniciar</Action>
          <Action tone="text-[#a0a0a0]">Iniciar</Action>
          <Action>Detener</Action>
          <Separator />
          <Action>Configuración avanzada...</Action>
          <Separator />
          <Action icon={<HelpIcon />}>Ayuda</Action>
        </div>
      </aside>
    </div>
  );
}
